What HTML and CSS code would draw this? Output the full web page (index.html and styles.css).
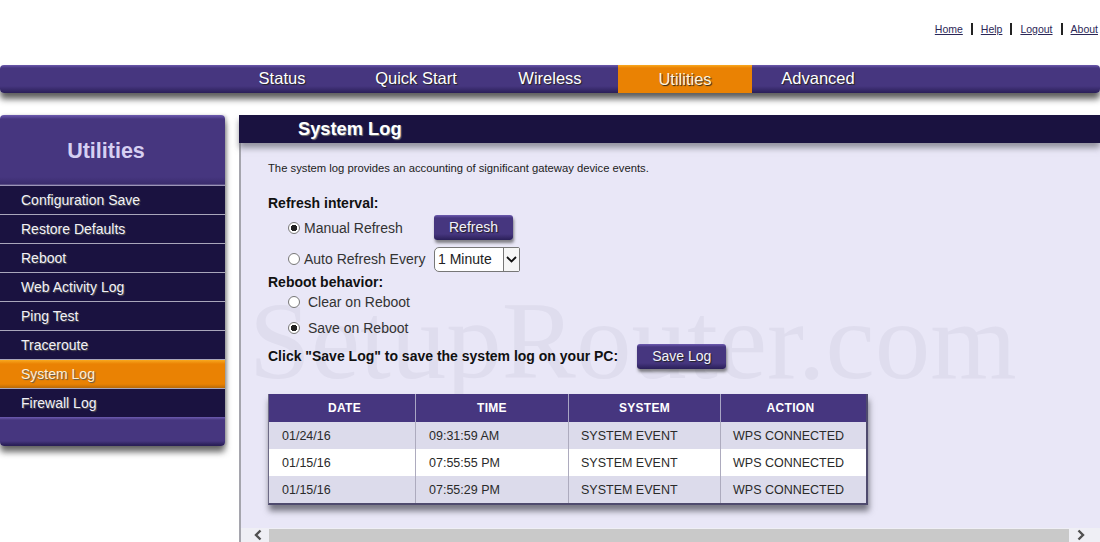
FILE: index.html
```html
<!DOCTYPE html>
<html lang="en">

<head>
    <meta charset="UTF-8">
    <meta name="viewport" content="width=device-width, initial-scale=1.0">
    <title>System Log</title>
    <link rel="stylesheet" href="styles.css">
</head>

<body>
    <div class="top-links">
        <a href="#">Home</a>
        <span class="sep"></span>
        <a href="#">Help</a>
        <span class="sep"></span>
        <a href="#">Logout</a>
        <span class="sep"></span>
        <a href="#">About</a>
    </div>

    <nav class="navbar">
        <a href="#">Status</a>
        <a href="#">Quick Start</a>
        <a href="#">Wireless</a>
        <a href="#" class="active">Utilities</a>
        <a href="#">Advanced</a>
    </nav>

    <div class="page">
        <aside class="sidebar">
            <h2>Utilities</h2>
            <ul>
                <li><a href="#">Configuration Save</a></li>
                <li><a href="#">Restore Defaults</a></li>
                <li><a href="#">Reboot</a></li>
                <li><a href="#">Web Activity Log</a></li>
                <li><a href="#">Ping Test</a></li>
                <li><a href="#">Traceroute</a></li>
                <li class="active"><a href="#">System Log</a></li>
                <li><a href="#">Firewall Log</a></li>
            </ul>
            <div class="sidebar-foot"></div>
        </aside>

        <main class="content">
            <h1>System Log</h1>
            <div class="content-body">
                <p class="intro">The system log provides an accounting of significant gateway device events.</p>

                <h3>Refresh interval:</h3>
                <div class="option-row row-manual">
                    <label><input type="radio" name="refresh" checked>Manual Refresh</label>
                    <button type="button" class="btn">Refresh</button>
                </div>
                <div class="option-row row-auto">
                    <label><input type="radio" name="refresh">Auto Refresh Every</label>
                    <div class="select-wrap">
                        <select>
                            <option>1 Minute</option>
                            <option>5 Minutes</option>
                        </select>
                        <span class="select-arrow">
                            <svg width="11" height="7" viewBox="0 0 11 7"><path d="M1 1l4.500 4.500L10 1" fill="none" stroke="#111" stroke-width="1.800"/></svg>
                        </span>
                    </div>
                </div>

                <h3>Reboot behavior:</h3>
                <div class="reboot-row"><label><input type="radio" name="reboot">Clear on Reboot</label></div>
                <div class="reboot-row"><label><input type="radio" name="reboot" checked>Save on Reboot</label></div>

                <div class="save-row">
                    <strong>Click "Save Log" to save the system log on your PC:</strong>
                    <button type="button" class="btn">Save Log</button>
                </div>

                <table class="log-table">
                    <thead>
                        <tr><th class="col-date">DATE</th><th class="col-time">TIME</th><th class="col-system">SYSTEM</th><th class="col-action">ACTION</th></tr>
                    </thead>
                    <tbody>
                        <tr><td>01/24/16</td><td>09:31:59 AM</td><td>SYSTEM EVENT</td><td>WPS CONNECTED</td></tr>
                        <tr><td>01/15/16</td><td>07:55:55 PM</td><td>SYSTEM EVENT</td><td>WPS CONNECTED</td></tr>
                        <tr><td>01/15/16</td><td>07:55:29 PM</td><td>SYSTEM EVENT</td><td>WPS CONNECTED</td></tr>
                    </tbody>
                </table>

                <div class="watermark">SetupRouter.com</div>
            </div>

            <div class="scrollbar">
                <svg width="10" height="12" viewBox="0 0 10 12"><path d="M7.500 1.500L3 6l4.500 4.500" fill="none" stroke="#505050" stroke-width="2.400"/></svg>
                <div class="scroll-thumb"></div>
                <svg width="10" height="12" viewBox="0 0 10 12"><path d="M2.500 1.500L7 6l-4.500 4.500" fill="none" stroke="#505050" stroke-width="2.400"/></svg>
            </div>
        </main>
    </div>
</body>

</html>
```

FILE: styles.css
```css
* {
    box-sizing: border-box;
}

html, body {
    height: 542px;
    overflow: hidden;
}

body {
    margin: 0;
    font-family: "Liberation Sans", Arial, sans-serif;
    background-color: #fff;
    color: #222;
}

/* top links */
.top-links {
    height: 65px;
    padding: 23px 2px 0 0;
    display: flex;
    justify-content: flex-end;
    align-items: flex-start;
    font-size: 10.500px;
    line-height: 13px;
}

.top-links a {
    color: #2b2757;
}

.sep {
    width: 2px;
    height: 12px;
    margin: 0 8px;
    background-color: #222;
}

/* main nav */
.navbar {
    height: 28px;
    padding-left: 215px;
    display: flex;
    border-radius: 4px;
    background: linear-gradient(#6b59ad 0, #46367f 3px, #46367f 21px, #2a1f58 28px);
    box-shadow: 0 6px 6px rgba(40, 40, 40, 0.75);
}

.navbar a {
    width: 134px;
    text-align: center;
    color: #fff;
    font-size: 16.500px;
    line-height: 27px;
    text-decoration: none;
    text-shadow: 1px 1px 1px #222;
}

.navbar a.active {
    margin: 0 -1px 0 1px;
    background: linear-gradient(#f9a91f 0, #ea8203 3px, #ea8203 100%);
    color: #fff3dc;
    line-height: 29px;
}

/* layout below nav */
.page {
    display: flex;
    gap: 14px;
    margin-top: 22px;
}

/* sidebar */
.sidebar {
    width: 225px;
    height: 331px;
    flex-shrink: 0;
    border-radius: 4px;
    box-shadow: 0 6px 6px rgba(40, 40, 40, 0.7), 2px 0 3px rgba(120, 120, 120, 0.3);
}

.sidebar h2 {
    margin: 0;
    height: 71px;
    padding: 23px 13px 0 0;
    border-radius: 4px 4px 0 0;
    text-align: center;
    font-size: 21.500px;
    line-height: 26px;
    color: #d6d0f2;
    background: linear-gradient(#6d5bb0 0, #46367f 4px, #46367f 62px, #3a2c6e 69px, #bdb8d0 71px);
}

.sidebar ul {
    list-style: none;
    margin: 0;
    padding: 0;
}

.sidebar li {
    height: 29px;
    background-color: #1a1240;
    border-bottom: 1px solid #a9a6bb;
}

.sidebar li:last-child {
    height: 28px;
    border-bottom: none;
}

.sidebar li a {
    display: block;
    padding-left: 21px;
    font-size: 14px;
    line-height: 28px;
    color: #f2f0f8;
    text-decoration: none;
    text-shadow: 1px 1px 1px #555;
}

.sidebar li.active {
    background: linear-gradient(#f9a91f 0, #ea8203 4px, #ea8203 24px, #b96a08 28px);
}

.sidebar li.active a {
    color: #fdf0d8;
}

.sidebar-foot {
    height: 29px;
    border-radius: 0 0 4px 4px;
    background: linear-gradient(#6d5bb0 0, #46367f 3px, #46367f 24px, #2a1f58 28px);
}

/* content */
.content {
    flex: 1;
    height: 427px;
    display: flex;
    flex-direction: column;
    background-color: #e9e7f7;
    border-left: 2px solid #a5a5ad;
}

.content h1 {
    margin: 0 0 0 -2px;
    height: 28px;
    padding-left: 59px;
    background-color: #1a1240;
    color: #fff;
    font-size: 18.300px;
    line-height: 28px;
    text-shadow: 1px 1px 1px #777;
    box-shadow: 0 5px 6px rgba(90, 90, 100, 0.6);
}

.content-body {
    flex: 1;
    position: relative;
    padding: 18px 0 0 27px;
    font-size: 14px;
}

.intro {
    margin: 0 0 20px;
    font-size: 11.250px;
    line-height: 14px;
}

.content-body h3 {
    margin: 0;
    font-size: 14px;
    line-height: 16px;
    color: #111;
}

.option-row {
    display: flex;
    align-items: center;
    padding-left: 20px;
}

.option-row label {
    width: 146px;
}

.row-manual {
    height: 30px;
    margin-top: 1px;
}

.row-manual label {
    padding-top: 2px;
}

.row-auto {
    height: 30px;
    margin-top: 2px;
}

.content-body label {
    color: #333;
}

.content-body input[type="radio"] {
    appearance: none;
    width: 12px;
    height: 12px;
    margin: 0 4px 0 0;
    border: 1px solid #777;
    border-radius: 50%;
    background-color: #fff;
    vertical-align: -1px;
}

.content-body input[type="radio"]:checked {
    background-image: radial-gradient(circle, #222 0, #222 3px, #fff 3.500px);
}

.reboot-row {
    height: 26px;
    padding-left: 20px;
    line-height: 24px;
}

.reboot-row input[type="radio"] {
    margin-right: 8px;
}

.save-row {
    display: flex;
    align-items: center;
    gap: 19px;
    height: 30px;
    margin-top: -1px;
    margin-bottom: 23px;
    font-weight: bold;
    color: #111;
}

.btn {
    height: 25px;
    padding: 0 15px;
    border: none;
    border-radius: 3px;
    background: linear-gradient(#6d5bb0 0, #46367f 3px, #46367f 19px, #2a1f58 25px);
    box-shadow: 1px 3px 3px rgba(60, 60, 60, 0.6);
    color: #f3f1fb;
    font-family: inherit;
    font-size: 14px;
    text-shadow: 1px 1px 1px #222;
}

.select-wrap {
    position: relative;
    width: 86px;
    height: 25px;
}

.select-wrap select {
    width: 100%;
    height: 100%;
    padding: 0 0 0 3px;
    appearance: none;
    border: 1px solid #777;
    border-radius: 5px 2px 2px 5px;
    background-color: #fff;
    color: #222;
    font-family: inherit;
    font-size: 14px;
}

.select-arrow {
    position: absolute;
    top: 1px;
    right: 1px;
    bottom: 1px;
    width: 16px;
    display: flex;
    align-items: center;
    justify-content: center;
    border-left: 1px solid #777;
    background-color: #f6f6f6;
}

/* log table */
.log-table {
    width: 600px;
    border-collapse: separate;
    border-spacing: 0;
    table-layout: fixed;
    border-right: 2px solid #4f4b6e;
    border-bottom: 2px solid #4f4b6e;
    border-left: 1px solid #6d6a86;
    box-shadow: 1px 6px 6px rgba(60, 60, 70, 0.65);
    font-size: 12.500px;
}

.col-date { width: 147px; }
.col-time { width: 153px; }
.col-system { width: 152px; }

.log-table th {
    height: 28px;
    padding: 0;
    background-color: #46367f;
    color: #fff;
    font-size: 12px;
    letter-spacing: 0.300px;
    border-right: 1px solid #a9a6c4;
}

.log-table th.col-date {
    padding-left: 5px;
}

.log-table th.col-action {
    padding-right: 6px;
}

.log-table th:last-child,
.log-table td:last-child {
    border-right: none;
}

.log-table td {
    height: 27px;
    padding: 0 0 0 13px;
    border-right: 1px solid #adabbe;
    background-color: #dcdbeb;
    color: #2a2a2a;
}

.log-table td:nth-child(n+3) {
    padding-left: 12px;
}

.log-table tbody tr:nth-child(2) td {
    background-color: #fff;
}

.watermark {
    position: absolute;
    left: 8px;
    top: 138px;
    font-family: "Liberation Serif", serif;
    font-size: 111px;
    line-height: 120px;
    color: #dfddee;
    white-space: nowrap;
}

.content-body > *:not(.watermark) {
    position: relative;
    z-index: 1;
}

/* bottom scrollbar */
.scrollbar {
    height: 14px;
    display: flex;
    align-items: center;
    padding: 0 14px 0 12px;
    background-color: #efeff5;
}

.scroll-thumb {
    flex: 1;
    height: 13px;
    margin: 0 7px 0 6px;
    background-color: #c9c9c9;
}
```
